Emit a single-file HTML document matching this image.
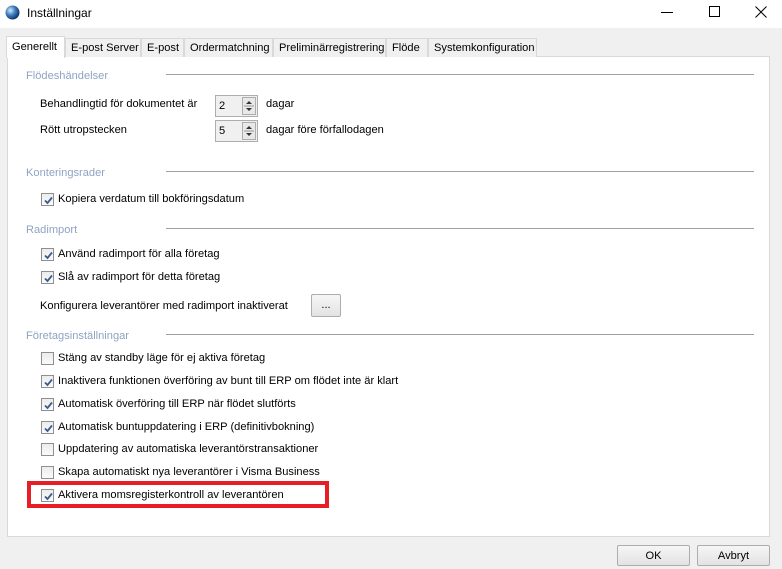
<!DOCTYPE html>
<html><head><meta charset="utf-8"><style>
*{box-sizing:border-box;margin:0;padding:0}
body{width:782px;height:569px;background:#f0f0f0;font-family:"Liberation Sans",sans-serif;font-size:11.1px;color:#000;position:relative;overflow:hidden}
.a{position:absolute;white-space:nowrap}
.title{left:0;top:0;width:782px;height:28px;background:#fff}
.tab{top:38px;height:19px;border:1px solid #d9d9d9;border-bottom:none;background:#f0f0f0;padding:3px 0 0 5px;overflow:hidden}
.panel{left:7px;top:56px;width:763px;height:481px;background:#fff;border:1px solid #d9d9d9}
.hdr{color:#8ea4c2}
.line{height:1px;background:#a0a0a0}
.cb{width:13px;height:13px;border:1px solid #8f8f8f;background:linear-gradient(#ececec,#fafafa)}
.cb svg{position:absolute;left:1px;top:1px}
.spin{width:43px;height:22px;border:1px solid #adadad;background:#f0f0f0;padding:4px 0 0 3px}
.spin .b{position:absolute;left:26px;top:1px;width:14px;height:18px;border:1px solid #adadad;background:#e8e8e8}
.btn{border:1px solid #adadad;background:linear-gradient(#f6f6f6,#e3e3e3);text-align:center;border-radius:2px}
.t{margin-top:1px}
</style></head><body>
<div class="a title"></div>
<svg class="a" style="left:5px;top:5px" width="15" height="15"><defs><radialGradient id="g" cx="35%" cy="35%" r="70%"><stop offset="0" stop-color="#d8e8f8"/><stop offset=".5" stop-color="#3c7cc0"/><stop offset="1" stop-color="#0c2e60"/></radialGradient></defs><circle cx="7.5" cy="7.5" r="7" fill="url(#g)"/></svg>
<div class="a" style="left:27px;top:6px;font-size:12px">Inställningar</div>
<div class="a" style="left:661px;top:12px;width:12px;height:1px;background:#000"></div>
<div class="a" style="left:709px;top:6px;width:11px;height:11px;border:1px solid #000"></div>
<svg class="a" style="left:755px;top:6px" width="12" height="12"><path d="M0.5 0.5L11.5 11.5M11.5 0.5L0.5 11.5" stroke="#000" stroke-width="1"/></svg>

<div class="a panel"></div>
<div class="a tab" style="left:65px;width:76px">E-post Server</div>
<div class="a tab" style="left:141px;width:43px">E-post</div>
<div class="a tab" style="left:184px;width:89px">Ordermatchning</div>
<div class="a tab" style="left:273px;width:113px">Preliminärregistrering</div>
<div class="a tab" style="left:386px;width:42px">Flöde</div>
<div class="a tab" style="left:428px;width:109px">Systemkonfiguration</div>
<div class="a tab" style="left:6px;top:36px;width:59px;height:22px;background:#fff;padding-top:4px">Generellt</div>

<div class="a hdr" style="left:26px;top:70px">Flödeshändelser</div><div class="a line" style="left:166px;top:74px;width:588px"></div>
<div class="a" style="left:40px;top:98px">Behandlingtid för dokumentet är</div>
<div class="a spin" style="left:215px;top:95px">2<div class="b"><svg width="12" height="16"><path d="M3 6L6 3L9 6Z M3 10L6 13L9 10Z" fill="#333"/><path d="M1 8H11" stroke="#999"/></svg></div></div>
<div class="a" style="left:266px;top:98px">dagar</div>
<div class="a" style="left:40px;top:124px">Rött utropstecken</div>
<div class="a spin" style="left:215px;top:120px">5<div class="b"><svg width="12" height="16"><path d="M3 6L6 3L9 6Z M3 10L6 13L9 10Z" fill="#333"/><path d="M1 8H11" stroke="#999"/></svg></div></div>
<div class="a" style="left:266px;top:124px">dagar före förfallodagen</div>

<div class="a hdr" style="left:26px;top:167px">Konteringsrader</div><div class="a line" style="left:166px;top:171px;width:588px"></div>
<div class="a hdr" style="left:26px;top:224px">Radimport</div><div class="a line" style="left:166px;top:228px;width:588px"></div>
<div class="a" style="left:40px;top:300px">Konfigurera leverantörer med radimport inaktiverat</div>
<div class="a btn" style="left:311px;top:294px;width:30px;height:23px;padding-top:4px">...</div>
<div class="a hdr" style="left:26px;top:330px">Företagsinställningar</div><div class="a line" style="left:166px;top:334px;width:588px"></div>

<div class="a" style="left:27px;top:481px;width:302px;height:27px;border:4px solid #e81e26"></div>

<div class="a cb" style="left:41px;top:193px"><svg width="11" height="11"><path d="M2 5.5L4.5 8L9 2.5" stroke="#3b5b8c" stroke-width="1.8" fill="none"/></svg></div><div class="a" style="left:58px;top:193px">Kopiera verdatum till bokföringsdatum</div>
<div class="a cb" style="left:41px;top:248px"><svg width="11" height="11"><path d="M2 5.5L4.5 8L9 2.5" stroke="#3b5b8c" stroke-width="1.8" fill="none"/></svg></div><div class="a" style="left:58px;top:248px">Använd radimport för alla företag</div>
<div class="a cb" style="left:41px;top:271px"><svg width="11" height="11"><path d="M2 5.5L4.5 8L9 2.5" stroke="#3b5b8c" stroke-width="1.8" fill="none"/></svg></div><div class="a" style="left:58px;top:271px">Slå av radimport för detta företag</div>
<div class="a cb" style="left:41px;top:352px"></div><div class="a" style="left:58px;top:352px">Stäng av standby läge för ej aktiva företag</div>
<div class="a cb" style="left:41px;top:375px"><svg width="11" height="11"><path d="M2 5.5L4.5 8L9 2.5" stroke="#3b5b8c" stroke-width="1.8" fill="none"/></svg></div><div class="a" style="left:58px;top:375px">Inaktivera funktionen överföring av bunt till ERP om flödet inte är klart</div>
<div class="a cb" style="left:41px;top:398px"><svg width="11" height="11"><path d="M2 5.5L4.5 8L9 2.5" stroke="#3b5b8c" stroke-width="1.8" fill="none"/></svg></div><div class="a" style="left:58px;top:398px">Automatisk överföring till ERP när flödet slutförts</div>
<div class="a cb" style="left:41px;top:421px"><svg width="11" height="11"><path d="M2 5.5L4.5 8L9 2.5" stroke="#3b5b8c" stroke-width="1.8" fill="none"/></svg></div><div class="a" style="left:58px;top:421px">Automatisk buntuppdatering i ERP (definitivbokning)</div>
<div class="a cb" style="left:41px;top:443px"></div><div class="a" style="left:58px;top:443px">Uppdatering av automatiska leverantörstransaktioner</div>
<div class="a cb" style="left:41px;top:466px"></div><div class="a" style="left:58px;top:466px">Skapa automatiskt nya leverantörer i Visma Business</div>
<div class="a cb" style="left:41px;top:489px"><svg width="11" height="11"><path d="M2 5.5L4.5 8L9 2.5" stroke="#3b5b8c" stroke-width="1.8" fill="none"/></svg></div><div class="a" style="left:58px;top:489px">Aktivera momsregisterkontroll av leverantören</div>

<div class="a btn" style="left:617px;top:545px;width:73px;height:21px;padding-top:4px">OK</div>
<div class="a btn" style="left:697px;top:545px;width:73px;height:21px;padding-top:4px">Avbryt</div>
</body></html>
